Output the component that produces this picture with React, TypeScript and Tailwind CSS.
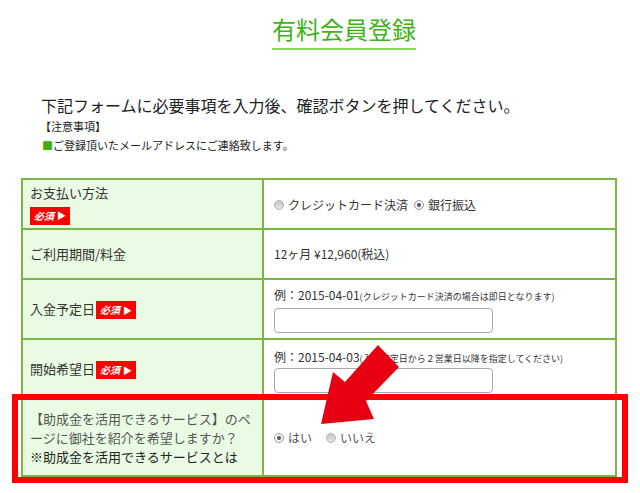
import React from "react";

const JP = { fontFamily: '"Noto Sans CJK JP", "Noto Sans", sans-serif' };

const Badge = () => (
  <span className="inline-flex h-[18px] w-[40px] items-center justify-center gap-[3px] bg-[#ff0000] text-[10px] font-bold leading-none text-white">
    <span className="italic">必須</span>
    <span className="text-[9px]">▶</span>
  </span>
);

const Radio = ({ checked, label }: { checked?: boolean; label: string }) => (
  <span className="inline-flex items-center gap-[4px]">
    <span
      className={`flex h-[10px] w-[10px] items-center justify-center rounded-full border ${
        checked ? "border-[#9a9a9a] bg-[#f4f4f4]" : "border-[#b0b0b0] bg-gradient-to-b from-[#c4c4c4] to-[#e6e6e6]"
      }`}
    >
      {checked && <span className="h-[4px] w-[4px] rounded-full bg-[#555]" />}
    </span>
    <span>{label}</span>
  </span>
);

const Row = ({
  h,
  left,
  right,
  leftClass = "",
  rightClass = "",
}: {
  h: string;
  left: React.ReactNode;
  right: React.ReactNode;
  leftClass?: string;
  rightClass?: string;
}) => (
  <div className={`flex ${h}`}>
    <div className={`w-[241px] shrink-0 border-b-2 border-r-2 border-[#7cb543] bg-[#e9fbe2] pl-[7px] ${leftClass}`}>
      {left}
    </div>
    <div className={`flex-1 border-b-2 border-r-2 border-[#7cb543] bg-white pl-[10px] ${rightClass}`}>{right}</div>
  </div>
);

export default function App() {
  return (
    <div className="relative h-[493px] w-[640px] overflow-hidden bg-white text-[#333]" style={JP}>
      {/* Title */}
      <div className="pt-[17px]">
        <h1 className="ml-[272px] w-fit border-b-2 border-[#8fd65c] pb-[7px] text-[24px] leading-[24px] font-normal text-[#3cb414]">
          有料会員登録
        </h1>
      </div>

      {/* Intro */}
      <p className="mt-[45px] pl-[41px] text-[16px] leading-[20px] text-[#222]">
        下記フォームに必要事項を入力後、確認ボタンを押してください。
      </p>
      <p className="mt-[4px] pl-[40px] text-[11px] leading-[14px] text-[#222]">【注意事項】</p>
      <p className="mt-[5px] pl-[42px] text-[11px] leading-[14px] text-[#222]">
        <span className="text-[#3eac0a]">■</span>ご登録頂いたメールアドレスにご連絡致します。
      </p>

      {/* Form table */}
      <div className="ml-[21px] mt-[26px] w-[596px] border-l-2 border-t-2 border-[#7cb543] text-[13px]">
        <Row
          h="h-[50px]"
          leftClass="flex flex-col justify-center"
          left={
            <>
              <span className="leading-[18px]">お支払い方法</span>
              <span className="mt-[3px]">
                <Badge />
              </span>
            </>
          }
          rightClass="flex items-center gap-[6px] text-[12px] pt-[2px]"
          right={
            <>
              <Radio label="クレジットカード決済" />
              <Radio checked label="銀行振込" />
            </>
          }
        />
        <Row
          h="h-[50px]"
          leftClass="flex items-center"
          left={<span>ご利用期間/料金</span>}
          rightClass="flex items-center text-[12px]"
          right={<span>12ヶ月 ¥12,960(税込)</span>}
        />
        <Row
          h="h-[60px]"
          leftClass="flex items-center"
          left={
            <>
              <span>入金予定日</span>
              <span className="ml-[1px]">
                <Badge />
              </span>
            </>
          }
          rightClass="pt-[7px]"
          right={
            <>
              <div className="text-[12px] leading-[16px]">
                例：2015-04-01<span className="text-[9px]">(クレジットカード決済の場合は即日となります)</span>
              </div>
              <div className="mt-[3px] h-[25px] w-[219px] rounded-[4px] border border-[#a9a9a9] bg-white" />
            </>
          }
        />
        <Row
          h="h-[60px]"
          leftClass="flex items-center"
          left={
            <>
              <span>開始希望日</span>
              <span className="ml-[1px]">
                <Badge />
              </span>
            </>
          }
          rightClass="pt-[9px]"
          right={
            <>
              <div className="text-[12px] leading-[16px]">
                例：2015-04-03<span className="text-[9px]">(入金確定日から２営業日以降を指定してください)</span>
              </div>
              <div className="mt-[1px] h-[25px] w-[219px] rounded-[4px] border border-[#a9a9a9] bg-white" />
            </>
          }
        />
        <Row
          h="h-[77px]"
          leftClass="flex flex-col justify-center leading-[19px] text-[#555]"
          left={
            <>
              <span>【助成金を活用できるサービス】のペ</span>
              <span>ージに御社を紹介を希望しますか？</span>
              <span className="text-[#222]">※助成金を活用できるサービスとは</span>
            </>
          }
          rightClass="flex items-center gap-[14px] text-[12px] text-[#555]"
          right={
            <>
              <Radio checked label="はい" />
              <Radio label="いいえ" />
            </>
          }
        />
      </div>

      {/* Annotation: red frame */}
      <div className="pointer-events-none absolute left-[12px] top-[394px] h-[89px] w-[616px] border-[6px] border-[#ff0000]" />

      {/* Annotation: arrow */}
      <svg className="pointer-events-none absolute left-0 top-0" width="640" height="493" viewBox="0 0 640 493">
        <polygon
          points="321,424 333,372 345,382 378,345 399,367 366,401 374,419"
          fill="#e60012"
        />
      </svg>
    </div>
  );
}
